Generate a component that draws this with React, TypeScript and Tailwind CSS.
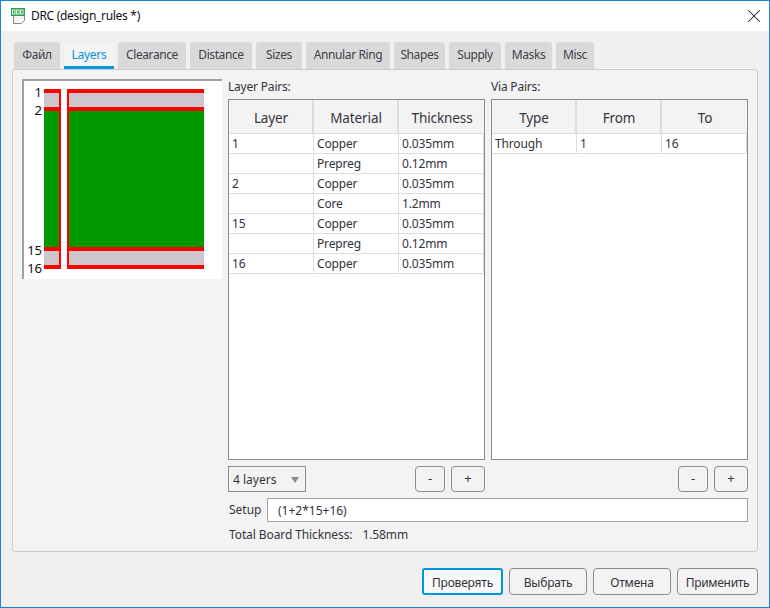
import React from 'react';
import { X } from 'lucide-react';

const tabs = [
  { label: 'Файл', w: 'w-[46px]' },
  { label: 'Layers', w: 'w-[50px]' },
  { label: 'Clearance', w: 'w-[68px]' },
  { label: 'Distance', w: 'w-[62px]' },
  { label: 'Sizes', w: 'w-[46px]' },
  { label: 'Annular Ring', w: 'w-[84px]' },
  { label: 'Shapes', w: 'w-[51px]' },
  { label: 'Supply', w: 'w-[52px]' },
  { label: 'Masks', w: 'w-[47px]' },
  { label: 'Misc', w: 'w-[38px]' },
];

const layerRows = [
  ['1', 'Copper', '0.035mm'],
  ['', 'Prepreg', '0.12mm'],
  ['2', 'Copper', '0.035mm'],
  ['', 'Core', '1.2mm'],
  ['15', 'Copper', '0.035mm'],
  ['', 'Prepreg', '0.12mm'],
  ['16', 'Copper', '0.035mm'],
];

const GridTable: React.FC<{ headers: string[]; rows: string[][] }> = ({ headers, rows }) => (
  <div className="h-[361px] w-[257px] border border-[#8c8c8c] bg-white">
    <div className="flex h-[34px] border-b border-[#dcdcdc] bg-[#f3f3f3]">
      {headers.map((h) => (
        <div key={h} className="flex w-[85px] items-center justify-center border-r-2 border-[#dcdcdc] pt-[2px] pl-[1px] text-[13.5px] tracking-[-0.1px] text-[#33333d] last:border-r-0">
          {h}
        </div>
      ))}
    </div>
    {rows.map((row, i) => (
      <div key={i} className="flex h-[20px]">
        {row.map((cell, j) => (
          <div key={j} className="w-[85px] border-r border-b border-[#dcdcdc] pl-[3px] text-[12px] leading-[19px] tracking-[-0.15px] text-[#33333d]">
            {cell}
          </div>
        ))}
      </div>
    ))}
  </div>
);

const SmallButton: React.FC<{ label: string; w: string }> = ({ label, w }) => (
  <button className={`${w} h-[26px] rounded-[4px] border border-[#8c8c8c] bg-[#f3f3f3] text-[13px] text-[#33333d]`}>{label}</button>
);

const LayerStack = () => (
  <div className="h-[200px] w-[200px] border-t-2 border-l-2 border-[#a0a0a0] bg-white">
    <svg width="198" height="198" viewBox="0 0 198 198" className="block">
      <rect x="20" y="8" width="15" height="18" fill="#cdc6cd" />
      <rect x="45" y="8" width="135" height="18" fill="#cdc6cd" />
      <rect x="20" y="30" width="15" height="136" fill="#009900" />
      <rect x="45" y="30" width="135" height="136" fill="#009900" />
      <rect x="20" y="170" width="15" height="14" fill="#cdc6cd" />
      <rect x="45" y="170" width="135" height="14" fill="#cdc6cd" />
      {[8, 26, 166, 184].map((y) => (
        <g key={y}>
          <rect x="20" y={y} width="17" height="4" fill="#ff0000" />
          <rect x="43" y={y} width="137" height="4" fill="#ff0000" />
        </g>
      ))}
      <rect x="35" y="8" width="2" height="180" fill="#ff0000" />
      <rect x="43" y="8" width="2" height="180" fill="#ff0000" />
      <g fontSize="13" fill="#111111" textAnchor="end" fontFamily="'Noto Sans', sans-serif">
        <text x="18" y="16">1</text>
        <text x="18" y="34">2</text>
        <text x="18" y="174">15</text>
        <text x="18" y="192">16</text>
      </g>
    </svg>
  </div>
);

export default function App() {
  return (
    <div className="flex h-[608px] w-[770px] flex-col border border-[#1883d7] bg-[#f0f0f0] font-['Noto_Sans',sans-serif]">
      <div className="flex h-[30px] items-center bg-white pr-[4px] pl-[9px]">
        <svg width="16" height="18" viewBox="0 0 16 18" className="mr-[5px]">
          <path d="M3.5 8.5v8h8l3-3v-5" fill="#f4f4f4" stroke="#8a8a8a" />
          <rect x="1" y="1" width="14" height="8" fill="#2f9e50" />
          <rect x="2.5" y="3" width="2.5" height="4" fill="none" stroke="#e8f5ec" />
          <rect x="6.5" y="3" width="2.5" height="4" fill="none" stroke="#e8f5ec" />
          <rect x="10.5" y="3" width="2.5" height="4" fill="none" stroke="#e8f5ec" />
        </svg>
        <span className="text-[12px] tracking-[-0.3px] text-[#111]">DRC (design_rules *)</span>
        <X className="ml-auto h-[22px] w-[22px] text-[#222]" strokeWidth={1.1} />
      </div>

      <div className="flex min-h-0 flex-1 flex-col px-[11px]">
        <div className="mt-[11px] flex h-[27px] gap-[4px] pl-[2px]">
          {tabs.map((t) => (
            <div
              key={t.label}
              className={
                t.label === 'Layers'
                  ? `${t.w} rounded-t-[3px] border-b-[3px] border-[#0097dc] bg-[#f3f3f3] text-center text-[12px] leading-[25px] tracking-[-0.3px] text-[#0097dc]`
                  : `${t.w} rounded-t-[3px] bg-[#d9d9d9] text-center text-[12px] leading-[25px] tracking-[-0.4px] text-[#40404c]`
              }
            >
              {t.label}
            </div>
          ))}
        </div>

        <div className="flex h-[483px] gap-[6px] rounded-[3px] border border-[#cccccc] bg-[#f3f3f3] pt-[9px] pl-[9px]">
          <LayerStack />
          <div className="flex w-[520px] flex-col">
            <div className="flex gap-[6px] text-[12px] leading-[16px] text-[#33333d]">
              <div className="w-[257px]">
                <div className="h-[20px] tracking-[-0.2px]">Layer Pairs:</div>
                <GridTable headers={['Layer', 'Material', 'Thickness']} rows={layerRows} />
              </div>
              <div className="w-[257px]">
                <div className="h-[20px] tracking-[-0.2px]">Via Pairs:</div>
                <GridTable headers={['Type', 'From', 'To']} rows={[['Through', '1', '16']]} />
              </div>
            </div>

            <div className="mt-[6px] flex gap-[6px]">
              <div className="flex w-[257px] items-center justify-between">
                <div className="flex h-[26px] w-[78px] items-center justify-between border border-[#8c8c8c] bg-[#f3f3f3] pt-[1px] pr-[6px] pl-[4px] text-[12px] text-[#33333d]">
                  4 layers
                  <svg width="8" height="6" viewBox="0 0 8 6"><path d="M0 0h8L4 6z" fill="#8a8a8a" /></svg>
                </div>
                <div className="flex gap-[6px]">
                  <SmallButton label="-" w="w-[30px]" />
                  <SmallButton label="+" w="w-[34px]" />
                </div>
              </div>
              <div className="flex w-[257px] items-center justify-end gap-[6px]">
                <SmallButton label="-" w="w-[30px]" />
                <SmallButton label="+" w="w-[34px]" />
              </div>
            </div>

            <div className="mt-[6px] flex h-[24px] items-center text-[12px] text-[#33333d]">
              <span className="w-[39px] pl-[1px]">Setup</span>
              <div className="flex h-[24px] w-[481px] items-center border border-[#a0a0a0] bg-white pt-[1px] pl-[10px]">(1+2*15+16)</div>
            </div>

            <div className="mt-[5px] pl-[1px] text-[12px] leading-[16px] tracking-[-0.1px] text-[#33333d]">
              <span className="mr-[10px]">Total Board Thickness:</span>1.58mm
            </div>
          </div>
        </div>

        <div className="mt-[16px] flex justify-end">
          <button className="mr-[6px] h-[27px] w-[81px] rounded-[3px] border-2 border-[#0097dc] bg-[#f8f8f8] pt-[2px] text-[12px] tracking-[-0.2px] text-[#33333d]">Проверять</button>
          <button className="mr-[6px] h-[27px] w-[78px] rounded-[4px] border border-[#8c8c8c] bg-[#f3f3f3] pt-[2px] text-[12px] tracking-[-0.2px] text-[#33333d]">Выбрать</button>
          <button className="mr-[6px] h-[27px] w-[78px] rounded-[4px] border border-[#8c8c8c] bg-[#f3f3f3] pt-[2px] text-[12px] tracking-[-0.2px] text-[#33333d]">Отмена</button>
          <button className="h-[27px] w-[81px] rounded-[4px] border border-[#8c8c8c] bg-[#f3f3f3] pt-[2px] text-[12px] tracking-[-0.3px] text-[#33333d]">Применить</button>
        </div>
      </div>
    </div>
  );
}
